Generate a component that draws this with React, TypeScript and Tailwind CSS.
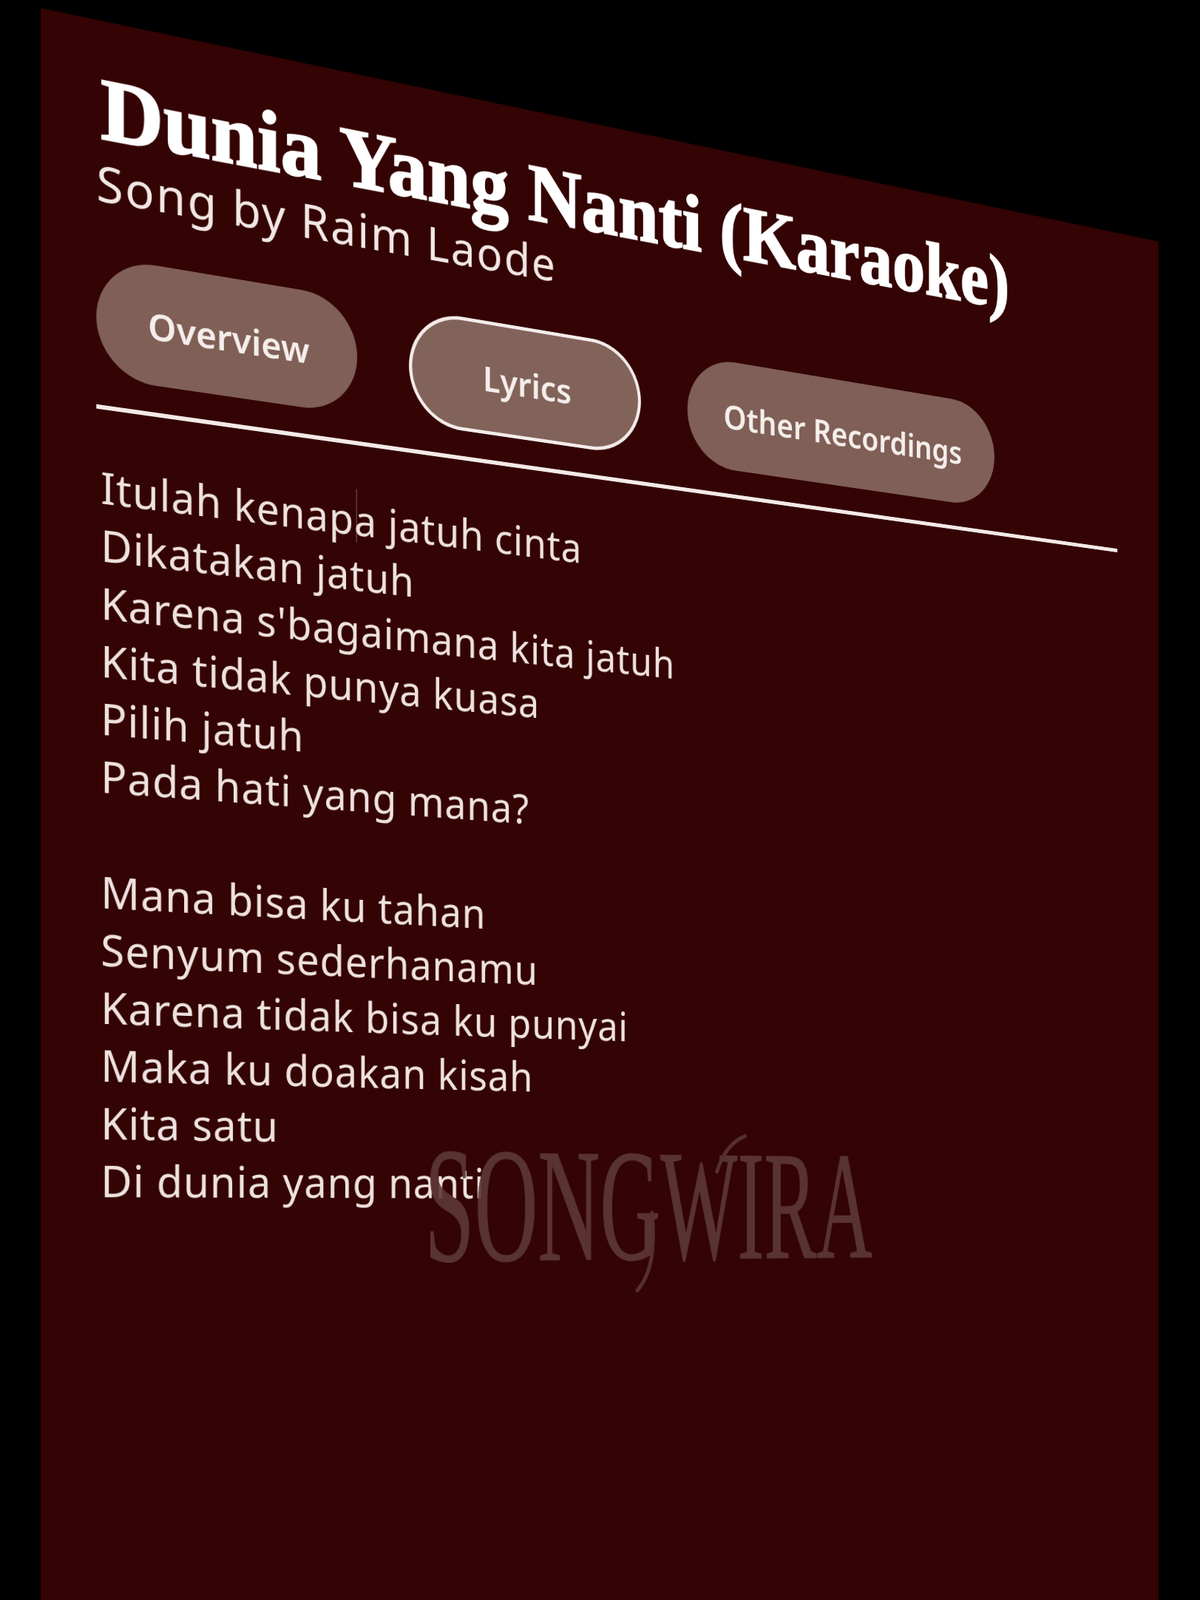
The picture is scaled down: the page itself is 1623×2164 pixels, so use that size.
export default function App() {
  const first = ["Dikatakan jatuh", "Karena s'bagaimana kita jatuh", "Kita tidak punya kuasa", "Pilih jatuh", "Pada hati yang mana?"];
  const second = ["Mana bisa ku tahan", "Senyum sederhanamu", "Karena tidak bisa ku punyai", "Maka ku doakan kisah", "Kita satu", "Di dunia yang nanti"];
  const pill = "flex h-[166px] items-center justify-center rounded-[83px] bg-[#7f5f56] text-[51px] font-semibold text-[#f5eeeb]";
  return (
    <div className="relative h-[2164px] w-[1623px] overflow-hidden bg-black font-['Noto_Sans',sans-serif]">
      <div className="relative h-[2290px] w-[1875px] origin-top-left bg-[#340303] pl-[76px] pr-[85px] pt-[62px] text-white [transform:matrix3d(1.00704,0.2102,0,0.000128,0,1,0,0,0,0,1,0,55,11,0,1)] blur-[0.7px]">
        <h1 className="ml-[6px] whitespace-nowrap font-['Liberation_Serif',serif] text-[121px] font-bold leading-[116px] tracking-[0.3px] [-webkit-text-stroke:2.5px_white]">
          Dunia Yang Nanti (Karaoke)
        </h1>
        <p className="mt-[9px] text-[68px] leading-[68px] tracking-[2.4px] text-[#f1e7e4]">Song by Raim Laode</p>
        <div className="mt-[67px] flex gap-[79px]">
          <div className={`${pill} w-[377px]`}>Overview</div>
          <div className={`${pill} w-[374px] border-[5px] border-[#f4ecea] bg-[#82635a]`}>Lyrics</div>
          <div className={`${pill} w-[560px]`}>Other Recordings</div>
        </div>
        <div className="mt-[37px] h-[6px] w-[1714px] bg-[#f3eae7]" />
        <div className="ml-[6px] mt-[67px] text-[60px] leading-[79px] tracking-[1px] text-[#eee2de]">
          <div className="whitespace-nowrap">
            Itulah kenap
            <span className="relative">
              <span className="absolute left-[3px] top-[-2px] h-[76px] w-[2px] bg-white/20" />
            </span>
            a jatuh cinta
          </div>
          {first.map((line) => (
            <div key={line} className="whitespace-nowrap">{line}</div>
          ))}
          <div className="h-[79px]" />
          {second.map((line) => (
            <div key={line} className="whitespace-nowrap">{line}</div>
          ))}
        </div>
        <div className="absolute left-[556px] top-[1498px] origin-top-left scale-x-[0.586] whitespace-nowrap font-['Liberation_Serif',serif] text-[240px] leading-[240px] text-[#5e3838] opacity-90 [-webkit-text-stroke:1.5px_#5e3838]">
          SONGWIRA
        </div>
        <svg className="pointer-events-none absolute left-0 top-0 h-[2290px] w-[1875px]" viewBox="0 0 1875 2290" fill="none" stroke="#553030" strokeWidth="6" strokeLinecap="round">
          <path d="M925 1629C930 1680 925 1720 900 1746" />
          <path d="M1085 1511C1060 1520 1045 1540 1036 1566" />
        </svg>
      </div>
    </div>
  );
}
